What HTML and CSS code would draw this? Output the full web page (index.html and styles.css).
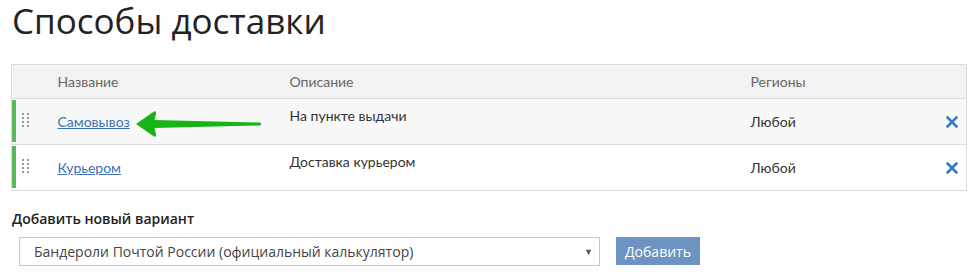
FILE: index.html
```html
<!DOCTYPE html>
<html lang="ru">
<head>
<meta charset="utf-8">
<title>Способы доставки</title>
<link rel="stylesheet" href="styles.css">
</head>
<body>
<div class="page">
  <h1 class="title">Способы доставки</h1>
  <div class="table-wrap">
    <table class="methods">
      <colgroup>
        <col class="c-handle"><col class="c-name"><col class="c-desc"><col class="c-region"><col class="c-del">
      </colgroup>
      <thead>
        <tr><th></th><th>Название</th><th>Описание</th><th>Регионы</th><th></th></tr>
      </thead>
      <tbody>
        <tr class="alt">
          <td class="handle"><span class="bar"></span><span class="dots"><i></i><i></i><i></i><i></i><i></i><i></i><i></i><i></i></span></td>
          <td><a href="#" class="link">Самовывоз</a></td>
          <td class="desc">На пункте выдачи</td>
          <td>Любой</td>
          <td class="del"><svg width="12" height="12" viewBox="0 0 12 12"><path d="M1.5 1.5L10.5 10.5M10.5 1.5L1.5 10.5" stroke="#3b7bbf" stroke-width="2.6" stroke-linecap="round"/></svg></td>
        </tr>
        <tr>
          <td class="handle"><span class="bar"></span><span class="dots"><i></i><i></i><i></i><i></i><i></i><i></i><i></i><i></i></span></td>
          <td><a href="#" class="link">Курьером</a></td>
          <td class="desc">Доставка курьером</td>
          <td>Любой</td>
          <td class="del"><svg width="12" height="12" viewBox="0 0 12 12"><path d="M1.5 1.5L10.5 10.5M10.5 1.5L1.5 10.5" stroke="#3b7bbf" stroke-width="2.6" stroke-linecap="round"/></svg></td>
        </tr>
      </tbody>
    </table>
    <svg class="arrow" width="130" height="30" viewBox="0 0 130 30">
      <path d="M2 14 L20 1.5 Q22.5 0.5 22 4 L20.5 10 L126 12.5 Q128.5 14 126 15.5 L20.5 18 L22 24 Q22.5 27.5 20 26.5 Z" fill="#17b317"/>
    </svg>
  </div>
  <div class="add-label">Добавить новый вариант</div>
  <div class="add-row">
    <div class="select-box"><span class="select-text">Бандероли Почтой России (официальный калькулятор)</span><span class="select-arrow">▼</span></div>
    <button class="btn">Добавить</button>
  </div>
</div>
</body>
</html>
```
FILE: styles.css
```css
html, body { margin: 0; padding: 0; background: #fff; }
.page { padding: 0 13px 0 11px; font-family: Lato, "Open Sans", sans-serif; color: #222; }
.title {
  margin: 0 0 22px 0;
  font-family: "Open Sans", sans-serif;
  font-weight: 400;
  font-size: 35px;
  line-height: 42px;
  color: #222;
  padding-left: 1px;
}
.table-wrap { position: relative; width: 955px; }
.methods {
  width: 955px;
  border-collapse: collapse;
  table-layout: fixed;
  font-size: 14px;
  border: 1px solid #dcdcdc;
}
.c-handle { width: 34px; }
.c-name { width: 232px; }
.c-desc { width: 461px; }
.c-region { width: 192px; }
.c-del { width: 36px; }
.methods th {
  background: #f2f2f2;
  color: #666;
  font-weight: 400;
  text-align: left;
  height: 33px;
  padding: 0 0 0 12px;
  border-bottom: 1px solid #dcdcdc;
}
.methods td {
  height: 45px;
  padding: 0 0 0 12px;
  vertical-align: middle;
  border-bottom: 1px solid #dcdcdc;
  color: #333;
}
.methods tr.alt td { background: #f8f8f8; }
.methods td.desc { vertical-align: top; padding-top: 8px; height: 37px; }
.methods td.handle { padding: 0; position: relative; }
.bar {
  position: absolute; left: 0; top: 1px; bottom: 2px; width: 4px; background: #5cb85c;
}
.dots {
  position: absolute; left: 10px; top: 14px;
  display: grid; grid-template-columns: 2px 2px; column-gap: 3px; row-gap: 2px;
}
.dots i { width: 2px; height: 2px; background: #999; display: block; }
.link { color: #3a72b5; text-decoration: underline; }
.del { text-align: left; }
.del svg { display: block; margin-left: 3px; }
.arrow { position: absolute; left: 123px; top: 46px; }
.add-label {
  margin-top: 18px;
  font-family: "Open Sans", sans-serif;
  font-weight: 600;
  font-size: 14px;
  line-height: 20px;
  color: #222;
  padding-left: 1px;
}
.add-row { display: flex; align-items: flex-start; gap: 16px; margin-top: 8px; padding-left: 8px; }
.select-box {
  width: 559px; height: 27px;
  border: 1px solid #c8c8c8;
  display: flex; align-items: center; justify-content: space-between;
  padding: 0 6px 0 14px;
  box-sizing: content-box;
  font-family: "Open Sans", sans-serif; font-size: 14px; color: #444;
}
.select-arrow { font-size: 9px; color: #555; }
.btn {
  height: 28px; width: 84px; border: none; margin: 0; padding: 0;
  background: #6d93c2; color: #fff;
  font-family: "Open Sans", sans-serif; font-size: 14px;
}
```
